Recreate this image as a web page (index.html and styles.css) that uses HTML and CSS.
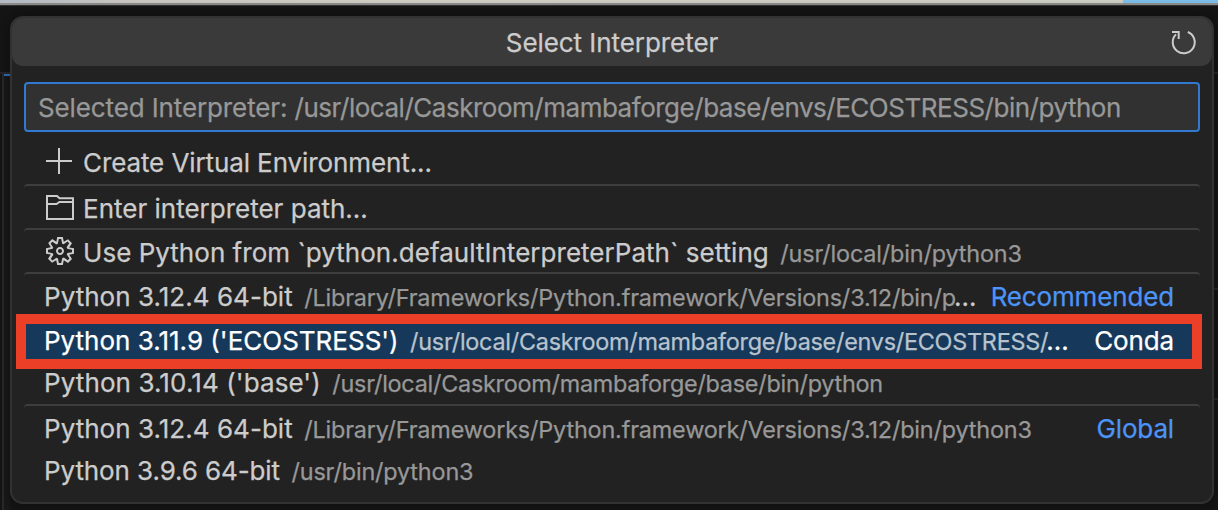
FILE: index.html
```
<!DOCTYPE html>
<html lang="en">
<head>
<meta charset="utf-8">
<title>Select Interpreter</title>
<link rel="stylesheet" href="styles.css">
</head>
<body>
<div class="desktop"><div class="desktop-sky"></div></div>
<main class="window">
  <div class="edge edge-left">
    <div class="edge-top"></div>
    <div class="edge-body"></div>
  </div>
  <section class="picker">
    <header class="titlebar">
      <h1 class="title">Select Interpreter</h1>
      <svg class="refresh" viewBox="0 0 28 28"><path d="M17.8 4A11 11 0 1 1 6 6.4M2 4H8.7V11"/></svg>
    </header>
    <div class="input"><span class="input-name">Selected Interpreter: </span>/usr/local/Caskroom/mambaforge/base/envs/ECOSTRESS/bin/python</div>
    <div class="list">
      <div class="row gap">
        <svg class="icon" viewBox="0 0 28 28"><path d="M0 14H26M13 1V27"/></svg>
        <span class="label snug">Create Virtual Environment...</span>
      </div>
      <div class="row sep">
        <svg class="icon" viewBox="0 0 28 28"><path d="M1 26V3H11L13.5 5.2H27V26ZM1 11H10.5L13.5 9H27"/></svg>
        <span class="label">Enter interpreter path...</span>
      </div>
      <div class="row sep">
        <svg class="icon solid" viewBox="1 1 14 14"><path fill-rule="evenodd" d="M9.1 4.4L8.6 2H7.4l-.5 2.4-.7.3-2-1.3-.9.8 1.3 2-.2.7-2.4.5v1.2l2.4.5.3.8-1.3 2 .8.8 2-1.3.8.3.4 2.3h1.2l.5-2.4.8-.3 2 1.3.8-.8-1.3-2 .3-.8 2.3-.4V7.4l-2.4-.5-.3-.8 1.3-2-.8-.8-2 1.3-.7-.2zM9.4 1l.5 2.4L12 2.1l2 2-1.4 2.1 2.4.4v2.8l-2.4.5L14 12l-2 2-2.1-1.4-.5 2.4H6.6l-.5-2.4L4 13.9l-2-2 1.4-2.1L1 9.4V6.6l2.4-.5L2.1 4l2-2 2.1 1.4.4-2.4h2.8zm.6 7c0 1.1-.9 2-2 2s-2-.9-2-2 .9-2 2-2 2 .9 2 2zM8 9c.6 0 1-.4 1-1s-.4-1-1-1-1 .4-1 1 .4 1 1 1z"/></svg>
        <span class="label roomy">Use Python from `python.defaultInterpreterPath` setting</span>
        <span class="desc">/usr/local/bin/python3</span>
      </div>
      <div class="row sep gap">
        <span class="label roomy">Python 3.12.4 64-bit</span>
        <span class="desc">/Library/Frameworks/Python.framework/Versions/3.12/bin/p</span><span class="more">...</span>
        <span class="tag">Recommended</span>
      </div>
      <div class="row selected">
        <span class="label">Python 3.11.9 ('ECOSTRESS')</span>
        <span class="desc tight">/usr/local/Caskroom/mambaforge/base/envs/ECOSTRESS/</span><span class="more">...</span>
        <span class="tag">Conda</span>
      </div>
      <div class="row gap">
        <span class="label wide">Python 3.10.14 ('base')</span>
        <span class="desc tight">/usr/local/Caskroom/mambaforge/base/bin/python</span>
      </div>
      <div class="row sep">
        <span class="label roomy">Python 3.12.4 64-bit</span>
        <span class="desc">/Library/Frameworks/Python.framework/Versions/3.12/bin/python3</span>
        <span class="tag">Global</span>
      </div>
      <div class="row">
        <span class="label snug">Python 3.9.6 64-bit</span>
        <span class="desc">/usr/bin/python3</span>
      </div>
    </div>
    <div class="highlight"></div>
  </section>
  <div class="edge edge-right">
    <div class="edge-top"></div>
    <div class="edge-pane"></div>
    <div class="edge-pane short"></div>
  </div>
</main>
</body>
</html>
```
FILE: styles.css
```
* { box-sizing: border-box; }
body {
  margin: 0;
  height: 510px;
  overflow: hidden;
  background: #181818;
  color: #ccc;
  font: 26px/41px Inter, "Liberation Sans", sans-serif;
  -webkit-text-stroke: .25px;
}
.desktop {
  display: flex;
  justify-content: flex-end;
  height: 5px;
  background: linear-gradient(90deg, #b4bbc5 0, #c9c7c2 130px, #d0cdc2 400px, #cccdc4 100%);
  border-bottom: 2px solid #8c8c8b;
}
.desktop-sky { width: 95px; background: #7dbde9; }
.window {
  display: flex;
  align-items: flex-start;
  height: 505px;
  border-top: 1px solid #343434;
  background: #151515;
}
.edge { height: 504px; display: flex; flex-direction: column; }
.edge-left { width: 10px; }
.edge-right { width: 4px; }
.edge-top { height: 68px; border-bottom: 2px solid #262626; background: #151515; }
.edge-left .edge-body {
  flex: 1;
  margin-left: 2px;
  border-left: 2px solid #292929;
  background: linear-gradient(#2f73c4 0 2px, #191919 2px);
}
.edge-pane { height: 216px; border-bottom: 2px solid #262626; background: #151515; }
.edge-pane.short { height: 110px; }

.picker {
  position: relative;
  width: 1204px;
  height: 488px;
  margin-top: 10px;
  border: 2px solid #323232;
  border-radius: 13px;
  background: #222;
  box-shadow: 0 0 14px 3px rgba(0, 0, 0, .28);
}
.titlebar {
  display: flex;
  align-items: center;
  height: 48px;
  padding: 0 14px 0 42px;
  border-radius: 11px;
  background: #3a3a3a;
}
.title { flex: 1; margin: 0; text-align: center; font-size: 26px; font-weight: 400; letter-spacing: -.06px; }
.refresh, .icon { width: 28px; height: 28px; fill: none; stroke: #ccc; stroke-width: 2; flex: none; }
.icon.solid { fill: #ccc; stroke: none; }
.input {
  height: 50px;
  margin: 16px 12px 8px;
  padding: 3px 12px 0;
  border: 2px solid #3179d1;
  border-radius: 4px;
  background: #313131;
  color: #989898;
  letter-spacing: -.48px;
  white-space: nowrap;
}
.input-name { letter-spacing: -.12px; }
.list { padding: 0 12px; }
.row {
  display: flex;
  align-items: baseline;
  height: 42px;
  padding: 2px 26px 0 20px;
  white-space: nowrap;
}
.row.gap { margin-bottom: 2px; }
.row.sep { height: 44px; border-top: 2px solid #3e3e3e; border-radius: 4px; }
.icon { align-self: flex-start; margin: 5px 9px 0 2px; }
.label.snug { letter-spacing: -.1px; }
.label.roomy { letter-spacing: .03px; }
.label.wide { letter-spacing: .1px; }
.desc { margin-left: 11.5px; color: #989898; font-size: 23.4px; letter-spacing: -.16px; }
.desc.tight { letter-spacing: -.25px; }
.more { margin-left: -2px; }
.tag { margin-left: auto; color: #4d94f8; letter-spacing: -.15px; }
.selected { background: #16385a; color: #fff; }
.selected .desc { color: #b9c3cd; }
.selected .tag { color: #fff; }
.highlight {
  position: absolute;
  left: 4px;
  top: 296px;
  width: 1186px;
  height: 55px;
  border: 10px solid #eb4027;
}
```
